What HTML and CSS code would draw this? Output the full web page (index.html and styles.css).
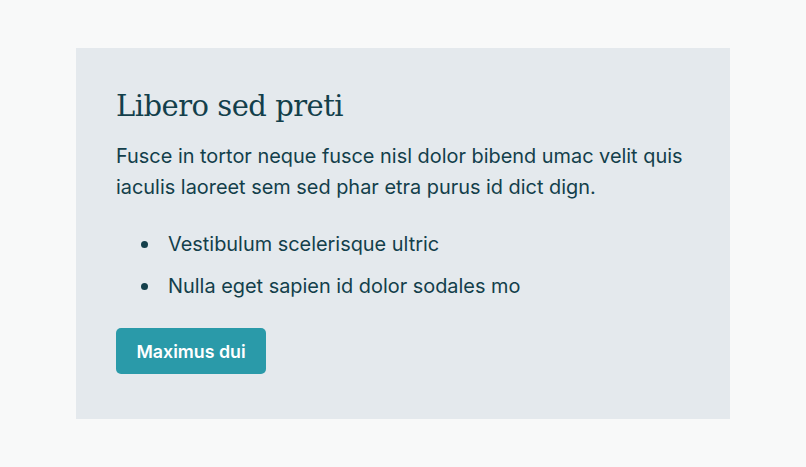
FILE: index.html
```html
<!DOCTYPE html>
<html>
<head>
<meta charset="utf-8">
<link rel="stylesheet" href="styles.css">
</head>
<body>
<main class="page">
  <section class="card">
    <h2 class="card-title">Libero sed preti</h2>
    <p class="card-text">Fusce in tortor neque fusce nisl dolor bibend umac velit quis iaculis laoreet sem sed phar etra purus id dict dign.</p>
    <ul class="card-list">
      <li>Vestibulum scelerisque ultric</li>
      <li>Nulla eget sapien id dolor sodales mo</li>
    </ul>
    <button class="card-btn">Maximus dui</button>
  </section>
</main>
</body>
</html>
```
FILE: styles.css
```css
html, body {
  margin: 0;
  padding: 0;
  background: #f8f9f9;
}
.page {
  padding: 48px 76px;
  box-sizing: border-box;
  height: 467px;
}
.card {
  background: #e4e9ed;
  padding: 40px 40px 45px;
  height: 371px;
  box-sizing: border-box;
  color: #133f4b;
  font-family: Inter, "Noto Sans", sans-serif;
}
.card-title {
  margin: 0;
  font-family: "DejaVu Serif", serif;
  font-weight: 400;
  font-size: 29px;
  letter-spacing: -0.5px;
  line-height: 36px;
}
.card-text {
  margin: 17px 0 0;
  font-size: 19.9px;
  line-height: 31px;
}
.card-list {
  list-style: none;
  margin: 26px 0 0;
  padding-left: 25px;
  font-size: 19.9px;
  line-height: 31px;
}
.card-list li {
  display: flex;
  align-items: center;
  gap: 20px;
  margin-bottom: 11px;
}
.card-list li::before {
  content: "";
  flex: none;
  width: 7px;
  height: 7px;
  border-radius: 50%;
  background: #133f4b;
}
.card-list li:last-child {
  margin-bottom: 0;
}
.card-btn {
  display: block;
  margin-top: 26px;
  width: 150px;
  height: 46px;
  padding: 0;
  border: none;
  border-radius: 5px;
  background: #2a9aa9;
  color: #ffffff;
  font-family: Inter, sans-serif;
  font-size: 17.8px;
  font-weight: 600;
}
```
